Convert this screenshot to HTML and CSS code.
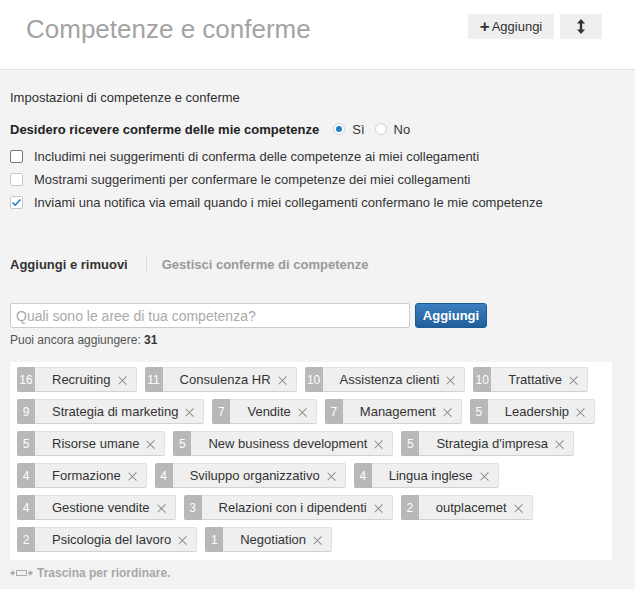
FILE: index.html
```html
<!DOCTYPE html>
<html lang="it">
<head>
<meta charset="utf-8">
<title>Competenze e conferme</title>
<link rel="stylesheet" href="styles.css">
</head>
<body>
<header class="top">
  <h1 class="title">Competenze e conferme</h1>
  <div class="top-actions">
    <button class="btn-light btn-add"><span class="plus">+</span>Aggiungi</button>
    <button class="btn-light btn-sort" aria-label="Riordina">
      <svg width="8" height="15" viewBox="0 0 8 15"><path d="M4 0 L8 4.5 L5.2 4.5 L5.2 10.5 L8 10.5 L4 15 L0 10.5 L2.8 10.5 L2.8 4.5 L0 4.5 Z" fill="#333"/></svg>
    </button>
  </div>
</header>
<main class="content">
  <h2 class="settings-title">Impostazioni di competenze e conferme</h2>
  <div class="endorse-row">
    <span class="endorse-label">Desidero ricevere conferme delle mie competenze</span>
    <span class="radio checked"></span><span class="radio-text">Sì</span>
    <span class="radio"></span><span class="radio-text">No</span>
  </div>
  <ul class="checks">
    <li class="check-row"><span class="checkbox dark"></span>Includimi nei suggerimenti di conferma delle competenze ai miei collegamenti</li>
    <li class="check-row"><span class="checkbox"></span>Mostrami suggerimenti per confermare le competenze dei miei collegamenti</li>
    <li class="check-row"><span class="checkbox checked"><svg width="11" height="9" viewBox="0 0 11 9"><path d="M1.5 4.5 L4.2 7.2 L9.5 1.5" fill="none" stroke="#1f7fc4" stroke-width="1.6"/></svg></span>Inviami una notifica via email quando i miei collegamenti confermano le mie competenze</li>
  </ul>
  <nav class="tabs">
    <span class="tab active">Aggiungi e rimuovi</span>
    <span class="tab-sep"></span>
    <span class="tab">Gestisci conferme di competenze</span>
  </nav>
  <div class="add-row">
    <input class="skill-input" type="text" placeholder="Quali sono le aree di tua competenza?">
    <button class="btn-primary">Aggiungi</button>
  </div>
  <p class="remaining">Puoi ancora aggiungere: <b>31</b></p>
  <div class="tags">
    <span class="tag"><span class="count">16</span><span class="name">Recruiting</span><span class="x"></span></span>
    <span class="tag"><span class="count">11</span><span class="name">Consulenza HR</span><span class="x"></span></span>
    <span class="tag"><span class="count">10</span><span class="name">Assistenza clienti</span><span class="x"></span></span>
    <span class="tag"><span class="count">10</span><span class="name">Trattative</span><span class="x"></span></span>
    <span class="tag"><span class="count">9</span><span class="name">Strategia di marketing</span><span class="x"></span></span>
    <span class="tag"><span class="count">7</span><span class="name">Vendite</span><span class="x"></span></span>
    <span class="tag"><span class="count">7</span><span class="name">Management</span><span class="x"></span></span>
    <span class="tag"><span class="count">5</span><span class="name">Leadership</span><span class="x"></span></span>
    <span class="tag"><span class="count">5</span><span class="name">Risorse umane</span><span class="x"></span></span>
    <span class="tag"><span class="count">5</span><span class="name">New business development</span><span class="x"></span></span>
    <span class="tag"><span class="count">5</span><span class="name">Strategia d'impresa</span><span class="x"></span></span>
    <span class="tag"><span class="count">4</span><span class="name">Formazione</span><span class="x"></span></span>
    <span class="tag"><span class="count">4</span><span class="name">Sviluppo organizzativo</span><span class="x"></span></span>
    <span class="tag"><span class="count">4</span><span class="name">Lingua inglese</span><span class="x"></span></span>
    <span class="tag"><span class="count">4</span><span class="name">Gestione vendite</span><span class="x"></span></span>
    <span class="tag"><span class="count">3</span><span class="name">Relazioni con i dipendenti</span><span class="x"></span></span>
    <span class="tag"><span class="count">2</span><span class="name">outplacemet</span><span class="x"></span></span>
    <span class="tag"><span class="count">2</span><span class="name">Psicologia del lavoro</span><span class="x"></span></span>
    <span class="tag"><span class="count">1</span><span class="name">Negotiation</span><span class="x"></span></span>
  </div>
  <p class="drag-hint">
    <svg class="drag-icon" width="23" height="8" viewBox="0 0 23 8"><path d="M0 4 L3.5 1 L3.5 3.2 L5 3.2 L5 4.8 L3.5 4.8 L3.5 7 Z" fill="#aaa"/><rect x="6.5" y="1.5" width="10" height="5" fill="none" stroke="#aaa" stroke-width="1"/><path d="M23 4 L19.5 1 L19.5 3.2 L18 3.2 L18 4.8 L19.5 4.8 L19.5 7 Z" fill="#aaa"/></svg>
    Trascina per riordinare.
  </p>
</main>
</body>
</html>
```
FILE: styles.css
```css
* { box-sizing: border-box; }
html, body { margin: 0; padding: 0; }
body {
  background: #f3f3f3;
  font-family: "Liberation Sans", Arial, sans-serif;
  color: #333;
  width: 635px;
  overflow: hidden;
}
.top {
  background: #fff;
  height: 70px;
  border-bottom: 1px solid #e3e3e3;
  display: flex;
  justify-content: space-between;
  align-items: flex-start;
  padding: 14px 33px 0 26px;
}
.title {
  margin: 1px 0 0;
  font-size: 26px;
  line-height: 28px;
  font-weight: normal;
  color: #a3a3a3;
}
.top-actions { display: flex; gap: 6px; }
.btn-light {
  height: 25px;
  border: none;
  background: #efefef;
  font-family: inherit;
  color: #333;
  display: flex;
  align-items: center;
  justify-content: center;
  padding: 0;
}
.btn-add { width: 86px; font-size: 13px; }
.plus { font-size: 17px; font-weight: bold; margin-right: 2px; line-height: 1; }
.btn-sort { width: 42px; }
.content { padding: 0 23px 0 10px; }
.settings-title {
  margin: 19px 0 0;
  font-size: 13px;
  line-height: 18px;
  font-weight: normal;
  color: #2e2e2e;
}
.endorse-row {
  margin-top: 13px;
  display: flex;
  align-items: center;
  height: 18px;
  font-size: 13px;
}
.endorse-label { font-weight: bold; color: #222; margin-right: 14px; }
.radio {
  width: 12px; height: 12px;
  border-radius: 50%;
  border: 1px solid #d0d0d0;
  background: #fff;
  display: inline-flex;
  align-items: center;
  justify-content: center;
}
.radio.checked::after {
  content: "";
  width: 6px; height: 6px;
  border-radius: 50%;
  background: #1f7fc4;
}
.radio-text { margin: 0 10px 0 7px; color: #333; }
.checks { list-style: none; margin: 7px 0 0; padding: 0; }
.check-row {
  height: 23px;
  display: flex;
  align-items: center;
  font-size: 13px;
  color: #333;
}
.checkbox {
  width: 13px; height: 13px;
  border: 1px solid #c8c8c8;
  border-radius: 2px;
  background: #fff;
  margin-right: 11px;
  display: inline-flex;
  align-items: center;
  justify-content: center;
}
.checkbox.dark { border-color: #777; }
.tabs {
  margin-top: 41px;
  display: flex;
  align-items: center;
  height: 18px;
  font-size: 13px;
  font-weight: bold;
}
.tab { color: #999; }
.tab.active { color: #333; }
.tab-sep {
  width: 1px; height: 18px;
  background: #ddd;
  margin: 0 15px 0 18px;
}
.add-row { margin-top: 30px; display: flex; gap: 5px; }
.skill-input {
  width: 400px; height: 25px;
  border: 1px solid #ccc;
  border-radius: 2px;
  background: #fff;
  padding: 0 5px;
  font-family: inherit;
  font-size: 14px;
  color: #333;
}
.skill-input::placeholder { color: #aaa; }
.btn-primary {
  width: 72px; height: 25px;
  border: 1px solid #1c5a93;
  border-radius: 3px;
  background: linear-gradient(#3a7fc0, #215f9b);
  color: #fff;
  font-family: inherit;
  font-size: 13px;
  font-weight: bold;
  padding: 0;
}
.remaining {
  margin: 4px 0 0;
  font-size: 12px;
  line-height: 16px;
  color: #555;
}
.remaining b { color: #333; }
.tags {
  margin-top: 14px;
  background: #fff;
  padding: 5px 7px 8px;
  display: flex;
  flex-wrap: wrap;
  gap: 7px 8px;
  height: 198px;
  align-content: flex-start;
}
.tag {
  display: inline-flex;
  align-items: center;
  height: 25px;
  background: #efefef;
  border: 1px solid #e0e0e0;
  border-bottom-color: #d2d2d2;
  border-radius: 2px;
  font-size: 13px;
  color: #333;
  padding-right: 9px;
}
.count {
  align-self: stretch;
  margin: -1px 0 -1px -1px;
  width: 18px;
  background: #b8b8b8;
  color: #fff;
  font-size: 12px;
  display: flex;
  align-items: center;
  justify-content: center;
  border-radius: 2px 0 0 2px;
}
.name { margin-left: 17px; }
.x {
  width: 9px; height: 10px;
  margin-left: 7px;
  position: relative;
}
.x::before, .x::after {
  content: "";
  position: absolute;
  left: 4px; top: 0;
  width: 1.4px; height: 11px;
  background: #8a8a8a;
  transform: rotate(45deg);
}
.x::after { transform: rotate(-45deg); }
.drag-hint {
  margin: 6px 0 0;
  display: flex;
  align-items: center;
  font-size: 12px;
  font-weight: bold;
  color: #a8a8a8;
  line-height: 14px;
}
.drag-icon { margin-right: 4px; }
```
